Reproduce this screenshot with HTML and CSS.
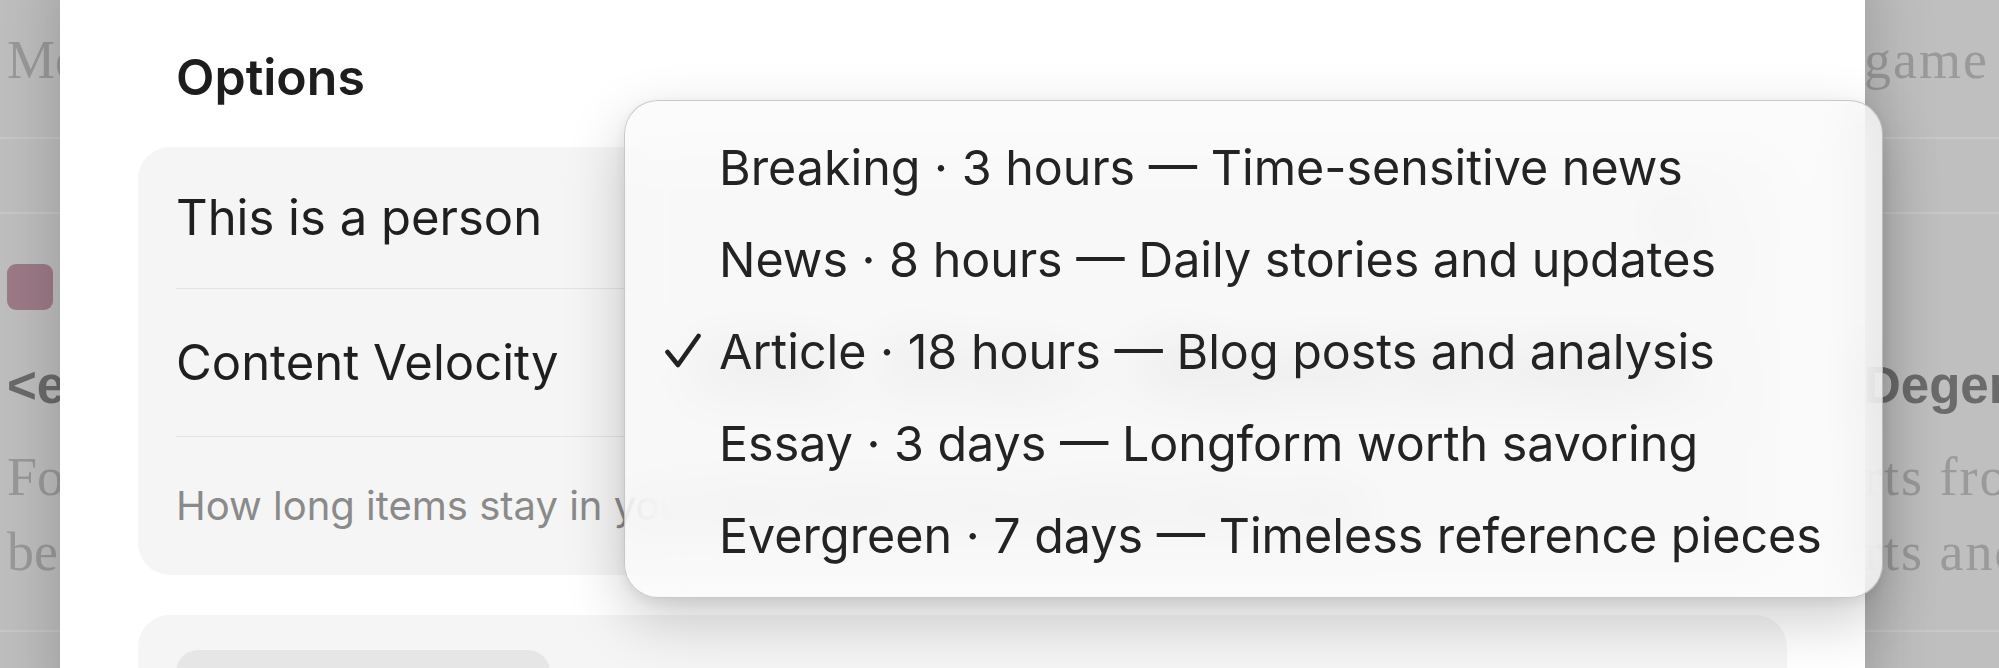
FILE: index.html
```html
<!DOCTYPE html>
<html lang="en">
<head>
<meta charset="utf-8">
<title>Options</title>
<link rel="stylesheet" href="styles.css">
</head>
<body>
<div class="feed">
  <div class="feed-row lead">
    <span class="lead-text">More notes from the week in review and the</span>
    <span class="tail">game of</span>
  </div>
  <div class="feed-row meta"></div>
  <article class="feed-row item">
    <div class="item-col">
      <div class="favicon"></div>
      <h3 class="item-title">&lt;em&gt;The quiet economics of small things&lt;/em&gt;</h3>
      <p class="item-excerpt">For years the story has been told the same way, but</p>
      <p class="item-excerpt">before long the numbers began to tell another one.</p>
    </div>
    <div class="item-col tail">
      <div class="favicon ghost"></div>
      <h3 class="item-title">Degenerates</h3>
      <p class="item-excerpt">rts from the</p>
      <p class="item-excerpt">rts and the</p>
    </div>
  </article>
</div>

<div class="modal">
  <h2 class="modal-title">Options</h2>
  <section class="card">
    <div class="row row-person">
      <span class="label">This is a person</span>
      <span class="toggle"><span class="knob"></span></span>
    </div>
    <div class="row row-velocity">
      <span class="label">Content Velocity</span>
      <span class="select">Article · 18 hours — Blog posts and analysis
        <svg class="chevrons" width="22" height="36" viewBox="0 0 22 36"><path d="M4 13 L11 6 L18 13 M4 23 L11 30 L18 23" fill="none" stroke="#444" stroke-width="3.5" stroke-linecap="round" stroke-linejoin="round"/></svg>
      </span>
    </div>
    <p class="hint">How long items stay in your feed before they quietly fade away.</p>
  </section>
  <section class="card card-alt">
    <div class="pill"></div>
  </section>
</div>

<ul class="menu">
  <li class="menu-item"><span class="check"></span><span>Breaking · 3 hours — Time-sensitive news</span></li>
  <li class="menu-item"><span class="check"></span><span>News · 8 hours — Daily stories and updates</span></li>
  <li class="menu-item is-selected"><span class="check"><svg width="36" height="36" viewBox="0 0 36 36"><path d="M2.5 19 L13 32 L33.5 3" fill="none" stroke="#222" stroke-width="4.6" stroke-linecap="round" stroke-linejoin="round"/></svg></span><span>Article · 18 hours — Blog posts and analysis</span></li>
  <li class="menu-item"><span class="check"></span><span>Essay · 3 days — Longform worth savoring</span></li>
  <li class="menu-item"><span class="check"></span><span>Evergreen · 7 days — Timeless reference pieces</span></li>
</ul>
</body>
</html>
```

FILE: styles.css
```css
* { box-sizing: border-box; }
html, body { margin: 0; padding: 0; }
body {
  width: 1999px;
  height: 668px;
  overflow: hidden;
  position: relative;
  background: #bfbfbf;
  font-family: Inter, "Noto Sans", "Liberation Sans", sans-serif;
}

/* background page (dimmed) */
.feed { display: flex; flex-direction: column; white-space: nowrap; }
.feed-row {
  display: flex;
  justify-content: space-between;
  padding-left: 7px;
  border-bottom: 2px solid #c8c8c8;
}
.tail { width: 135px; flex: none; overflow: visible; letter-spacing: 2px; }
.lead {
  height: 139px;
  padding-top: 23px;
  font: 54px/75px "Liberation Serif", serif;
  color: #9a9a9a;
}
.meta { height: 75px; }
.item { height: 418px; padding-top: 50px; }
.item-col { display: flex; flex-direction: column; }
.favicon {
  width: 46px; height: 46px;
  border-radius: 9px;
  background: #9d7b88;
  margin-bottom: 46px;
}
.favicon.ghost { visibility: hidden; }
.item-title {
  margin: 0 0 24px;
  font: 700 51px/60px "Liberation Sans", Arial, sans-serif;
  letter-spacing: 0;
  color: #6b6b6b;
}
.item-excerpt {
  margin: 0;
  font: 54px/75px "Liberation Serif", serif;
  color: #9a9a9a;
}

/* modal sheet */
.modal {
  position: absolute;
  left: 60px;
  top: -40px;
  width: 1805px;
  height: 780px;
  background: #fff;
  border-radius: 32px;
  box-shadow: 0 0 70px rgba(0,0,0,0.22);
  padding: 88px 78px 0;
}
.modal-title {
  margin: 0 0 41px 38px;
  font-size: 50px;
  line-height: 58px;
  font-weight: 600;
  color: #1d1d1d;
}
.card {
  background: #f5f5f5;
  border-radius: 32px;
  padding: 0 38px;
}
.row {
  display: flex;
  align-items: center;
  justify-content: space-between;
  border-bottom: 1px solid #e3e3e3;
}
.row-person { height: 142px; }
.row-velocity { height: 148px; }
.label {
  font-size: 49px;
  line-height: 58px;
  color: #1f1f1f;
}
.toggle {
  width: 100px; height: 60px;
  border-radius: 30px;
  background: #e0e0e0;
  display: flex;
  align-items: center;
  justify-content: flex-end;
  padding: 3px;
}
.knob {
  width: 54px; height: 54px;
  border-radius: 50%;
  background: #fff;
  box-shadow: 0 2px 6px rgba(0,0,0,0.25);
}
.select {
  display: flex;
  align-items: center;
  gap: 22px;
  height: 72px;
  padding: 0 22px 0 26px;
  background: #fff;
  border-radius: 16px;
  box-shadow: 0 3px 10px rgba(0,0,0,0.3), 0 0 0 1px rgba(0,0,0,0.08);
  font-size: 48px;
  color: #222;
  white-space: nowrap;
}
.hint {
  margin: 0;
  padding: 46px 0;
  font-size: 40px;
  line-height: 46px;
  color: #8a8a8a;
  white-space: nowrap;
}
.card-alt {
  margin-top: 40px;
  height: 220px;
  padding-top: 35px;
}
.pill {
  width: 374px;
  height: 80px;
  border-radius: 22px;
  background: #e6e6e6;
}

/* popup menu */
.menu {
  position: absolute;
  left: 624px;
  top: 100px;
  width: 1259px;
  height: 498px;
  margin: 0;
  padding: 20px 0 16px;
  list-style: none;
  border: 1px solid rgba(0,0,0,0.2);
  border-radius: 34px;
  background: rgba(249,249,249,0.72);
  -webkit-backdrop-filter: blur(26px);
  backdrop-filter: blur(26px);
  box-shadow: 0 22px 60px rgba(0,0,0,0.2), 0 4px 14px rgba(0,0,0,0.08);
}
.menu-item {
  display: flex;
  align-items: center;
  height: 92px;
  font-size: 48.4px;
  color: #232323;
  white-space: nowrap;
}
.check {
  width: 94px;
  flex: none;
  padding-left: 40px;
  display: flex;
  align-items: center;
}
```
